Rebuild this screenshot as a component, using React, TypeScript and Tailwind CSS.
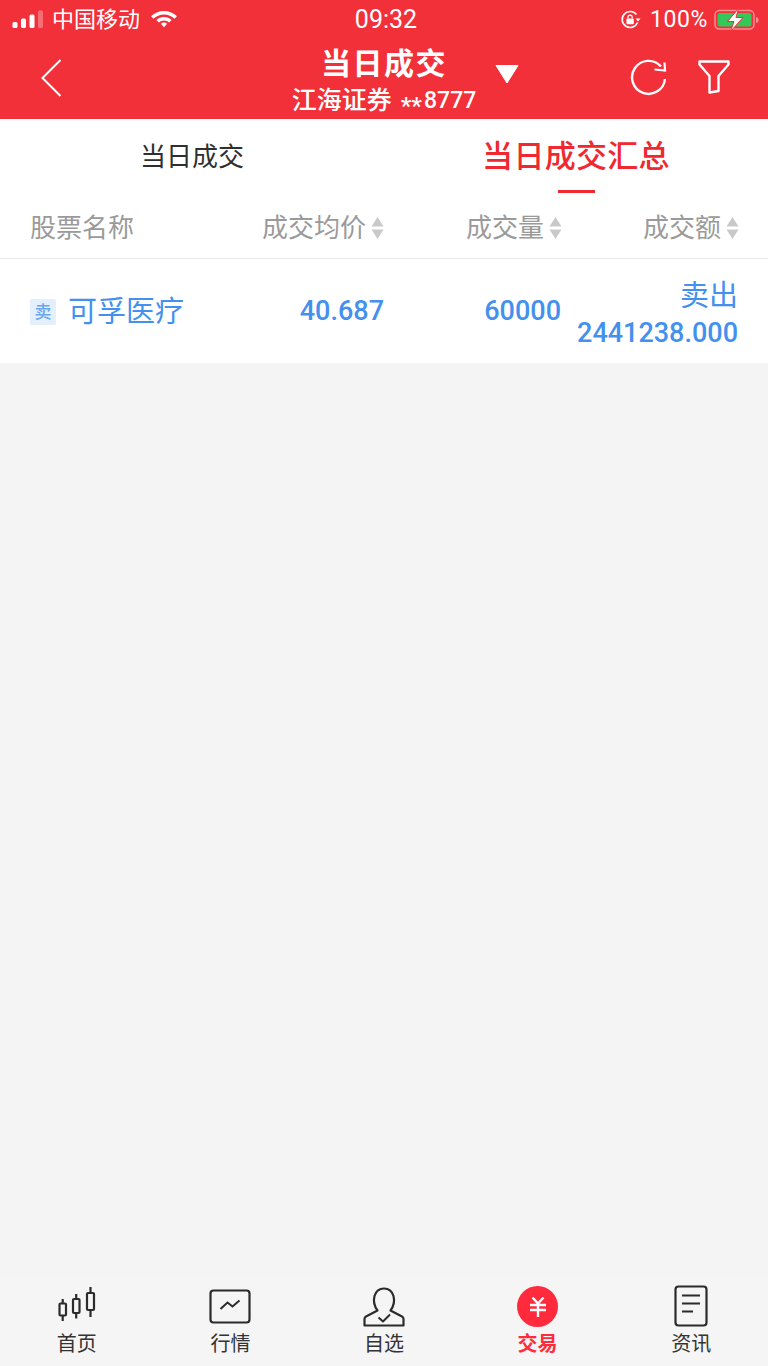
import React from 'react';

const FONT = "font-['Roboto','Noto_Sans_CJK_SC',sans-serif]";

const SortArrows = () => (
  <svg width="13" height="24" viewBox="0 0 13 24" className="shrink-0">
    <path d="M6.5 1 L12.5 10.5 H0.5 Z" fill="#c9c9c9" />
    <path d="M6.5 23 L12.5 13.5 H0.5 Z" fill="#c9c9c9" />
  </svg>
);

const SignalIcon = () => (
  <svg width="32" height="20" viewBox="0 0 32 20">
    <rect x="0.5" y="12" width="5" height="6" rx="1.5" fill="#fff" />
    <rect x="9" y="8.5" width="5" height="9.5" rx="1.5" fill="#fff" />
    <rect x="17.5" y="4.5" width="5" height="13.5" rx="1.5" fill="#fff" />
    <rect x="26" y="0.5" width="5" height="17.5" rx="1.5" fill="#fff" fillOpacity="0.3" />
  </svg>
);

const WifiIcon = () => (
  <svg width="28" height="20" viewBox="0 0 28 20">
    <path d="M14 1 C19 1 23.5 3 27 6.2 L24.6 8.8 C21.8 6.2 18 4.6 14 4.6 C10 4.6 6.2 6.2 3.4 8.8 L1 6.2 C4.5 3 9 1 14 1 Z" fill="#fff" />
    <path d="M14 7 C16.9 7 19.6 8.1 21.6 10 L19.2 12.6 C17.8 11.3 16 10.5 14 10.5 C12 10.5 10.2 11.3 8.8 12.6 L6.4 10 C8.4 8.1 11.1 7 14 7 Z" fill="#fff" />
    <path d="M14 12.6 C15.2 12.6 16.3 13 17.1 13.8 L14 17.2 L10.9 13.8 C11.7 13 12.8 12.6 14 12.6 Z" fill="#fff" />
  </svg>
);

const RotationLockIcon = () => (
  <svg width="22" height="20" viewBox="0 0 22 20">
    <path d="M17.6 12.5 A8 8 0 1 1 16.5 4.6" fill="none" stroke="#fff" strokeWidth="1.6" />
    <path d="M15.5 8.5 L20.5 8.5 L18 11.6 Z" fill="#fff" />
    <rect x="6.4" y="8.6" width="7.4" height="5.6" rx="1" fill="#fff" />
    <path d="M8 8.6 V7.2 A2.1 2.1 0 0 1 12.2 7.2 V8.6" fill="none" stroke="#fff" strokeWidth="1.2" />
  </svg>
);

const BatteryIcon = () => (
  <svg width="46" height="24" viewBox="0 0 46 24">
    <rect x="1" y="2.5" width="39" height="18.5" rx="4.5" fill="none" stroke="#fff" strokeOpacity="0.45" strokeWidth="1.5" />
    <rect x="3.5" y="5" width="34" height="13.5" rx="2.5" fill="#34c759" />
    <path d="M42 9 C44 9.5 44.6 10.5 44.6 12 C44.6 13.5 44 14.5 42 15 Z" fill="#fff" fillOpacity="0.45" />
    <path d="M24.5 0.5 L13.5 13.5 H20 L16.5 23.5 L29 9.5 H22 L24.5 0.5 Z" fill="#fff" stroke="#f2303a" strokeWidth="1" />
  </svg>
);

const BackIcon = () => (
  <svg width="24" height="40" viewBox="0 0 24 40">
    <path d="M20.5 2 L2.5 20 L20.5 38" fill="none" stroke="#fff" strokeWidth="2" />
  </svg>
);

const RefreshIcon = () => (
  <svg width="38" height="38" viewBox="0 0 38 38">
    <path d="M31 7.5 A16.5 16.5 0 1 0 35 20" fill="none" stroke="#fff" strokeWidth="2.4" />
    <path d="M24.5 10.5 L35 11.5 L34.5 3.5" fill="none" stroke="#fff" strokeWidth="2.2" />
  </svg>
);

const FilterIcon = () => (
  <svg width="34" height="36" viewBox="0 0 34 36">
    <path d="M1.5 2.5 H30.5 V5.5 L20.5 17 V32 L11.5 33.5 V17 L1.5 5.5 Z" fill="none" stroke="#fff" strokeWidth="2.4" strokeLinejoin="round" />
  </svg>
);

const HomeIcon = () => (
  <svg width="40" height="41" viewBox="0 0 40 41" fill="none" stroke="#2b2b2b" strokeWidth="2.2">
    <rect x="2.5" y="17.5" width="6.5" height="12" rx="1" />
    <path d="M5.7 13 V17.5 M5.7 29.5 V35" />
    <rect x="16" y="13" width="6.5" height="14" rx="1" />
    <path d="M19.2 8 V13 M19.2 27 V32.5" />
    <rect x="30" y="7" width="7" height="17" rx="1" />
    <path d="M33.5 1 V7 M33.5 24 V31" />
  </svg>
);

const MarketIcon = () => (
  <svg width="42" height="38" viewBox="0 0 42 38" fill="none" stroke="#2b2b2b" strokeWidth="2.2">
    <rect x="1.5" y="1.5" width="39" height="32" rx="3" />
    <path d="M11.5 20 L18.5 13.5 L23.5 17.5 L30.5 11.5" strokeWidth="2" />
  </svg>
);

const WatchIcon = () => (
  <svg width="42" height="40" viewBox="0 0 42 40" fill="none" stroke="#2b2b2b" strokeWidth="2.2" strokeLinejoin="round">
    <path d="M14.5 23.5 C10.5 18 10.5 13 11.5 9 C13 4 17 1.5 21 1.5 C25 1.5 29 4 30.5 9 C31.5 13 31.5 18 27.5 23.5 L39 29.5 C40 30 40.5 31 40.5 32 V38.5 H1.5 V32 C1.5 31 2 30 3 29.5 Z" />
    <path d="M15.5 30.5 L20 34.5 L27 27.5" strokeWidth="2" />
  </svg>
);

const TradeIcon = () => (
  <div className="flex h-[41px] w-[41px] items-center justify-center rounded-full bg-[#ff2a3c]">
    <svg width="18" height="20" viewBox="0 0 18 20" fill="none" stroke="#fff" strokeWidth="2.4">
      <path d="M3.5 0.5 L9 6.5 L14.5 0.5 M1 8 H17 M1 13 H17 M9 6.5 V20" />
    </svg>
  </div>
);

const NewsIcon = () => (
  <svg width="34" height="42" viewBox="0 0 34 42" fill="none" stroke="#2b2b2b" strokeWidth="2.2">
    <rect x="1.5" y="1.5" width="31" height="39" rx="3" />
    <path d="M8 10.5 H26 M8 18.5 H26 M8 26.5 H19" />
  </svg>
);

const NAV_ITEMS = [
  { label: '首页', icon: <HomeIcon /> },
  { label: '行情', icon: <MarketIcon /> },
  { label: '自选', icon: <WatchIcon /> },
  { label: '交易', icon: <TradeIcon />, active: true },
  { label: '资讯', icon: <NewsIcon /> },
];

const COLUMNS = [
  { label: '成交均价', width: 'w-[177px]' },
  { label: '成交量', width: 'w-[178px]' },
  { label: '成交额', width: 'w-[177px]' },
];

export default function App() {
  return (
    <div className={`flex h-[1366px] w-[768px] flex-col overflow-hidden bg-[#f4f4f4] ${FONT}`}>
      <div className="bg-[#f2303a] text-white">
        <div className="flex h-[40px] items-center justify-between pl-[12px] pr-[8px]">
          <div className="flex w-[300px] items-center">
            <SignalIcon />
            <span className="ml-[8px] text-[22px] leading-[28px]">中国移动</span>
            <span className="ml-[10px]">
              <WifiIcon />
            </span>
          </div>
          <span className="text-[25px] leading-[28px]">09:32</span>
          <div className="flex w-[300px] items-center justify-end">
            <RotationLockIcon />
            <span className="ml-[8px] mr-[6px] text-[23px] leading-[28px] tracking-[0.6px]">100%</span>
            <BatteryIcon />
          </div>
        </div>
        <div className="flex h-[79px] items-start pl-[40px] pr-[36px]">
          <div className="mt-[18px] w-[24px]">
            <BackIcon />
          </div>
          <div className="ml-[226px] flex w-[188px] flex-col items-center">
            <span className="mt-[5px] whitespace-nowrap text-[30px] font-bold leading-[38px] tracking-[1.5px]">当日成交</span>
            <span className="mt-[3px] flex items-center whitespace-nowrap text-[25px] font-medium leading-[30px]">
              江海证券
              <span className="ml-[9px] mr-[2px] translate-y-[5px] text-[24px]">**</span>
              <span className="text-[23px]">8777</span>
            </span>
          </div>
          <svg width="24" height="20" viewBox="0 0 24 20" className="ml-[17px] mt-[24px]">
            <path d="M1 1.5 H23 L12 19 Z" fill="#fff" stroke="#fff" strokeWidth="1" strokeLinejoin="round" />
          </svg>
          <div className="ml-auto mt-[19px] flex items-start gap-[30px]">
            <RefreshIcon />
            <FilterIcon />
          </div>
        </div>
      </div>

      <div className="bg-white">
        <div className="flex h-[74px]">
          <div className="flex w-[384px] justify-center pt-[21px]">
            <span className="text-[26px] leading-[34px] text-[#2f2f2f]">当日成交</span>
          </div>
          <div className="flex w-[384px] flex-col items-center pt-[19px]">
            <span className="text-[31px] font-medium leading-[38px] tracking-[0.3px] text-[#f0282f]">当日成交汇总</span>
            <span className="mt-[14px] h-[4px] w-[37px] bg-[#f0282f]" />
          </div>
        </div>
        <div className="flex h-[66px] items-center border-b border-[#e8e8e8] pt-[4px] pl-[30px] pr-[29px]">
          <span className="w-[179px] text-[26px] leading-[34px] text-[#9a9a9a]">股票名称</span>
          <div className="flex flex-1 justify-end">
            {COLUMNS.map((col) => (
              <div key={col.label} className={`flex ${col.width} items-center justify-end gap-[5px]`}>
                <span className="text-[26px] leading-[34px] text-[#9a9a9a]">{col.label}</span>
                <SortArrows />
              </div>
            ))}
          </div>
        </div>
        <div className="flex h-[104px] items-center pl-[30px] pr-[30px] text-[#4390ee]">
          <div className="mt-[2px] flex w-[224px] items-center">
            <span className="flex h-[26px] w-[26px] items-center justify-center rounded-[2px] bg-[#e3effc] text-[17px] font-medium leading-none text-[#6ba6ee]">
              卖
            </span>
            <span className="ml-[12px] text-[29px] leading-[38px]">可孚医疗</span>
          </div>
          <span className="w-[130px] text-right text-[27px] font-medium leading-[36px]">40.687</span>
          <span className="w-[177px] text-right text-[27px] font-medium leading-[36px]">60000</span>
          <div className="mt-[6px] flex flex-1 flex-col items-end">
            <span className="text-[29px] leading-[38px]">卖出</span>
            <span className="whitespace-nowrap text-[27px] font-medium leading-[36px]">2441238.000</span>
          </div>
        </div>
      </div>

      <div className="mt-auto flex h-[91px] bg-[#f5f5f5]">
        {NAV_ITEMS.map((item) => (
          <div key={item.label} className="flex flex-1 flex-col items-center">
            <div className="flex h-[52px] items-end">{item.icon}</div>
            <span
              className={`mt-[3px] text-[20px] leading-[28px] ${
                item.active ? 'font-bold text-[#ff2a3c]' : 'text-[#333333]'
              }`}
            >
              {item.label}
            </span>
          </div>
        ))}
      </div>
    </div>
  );
}
